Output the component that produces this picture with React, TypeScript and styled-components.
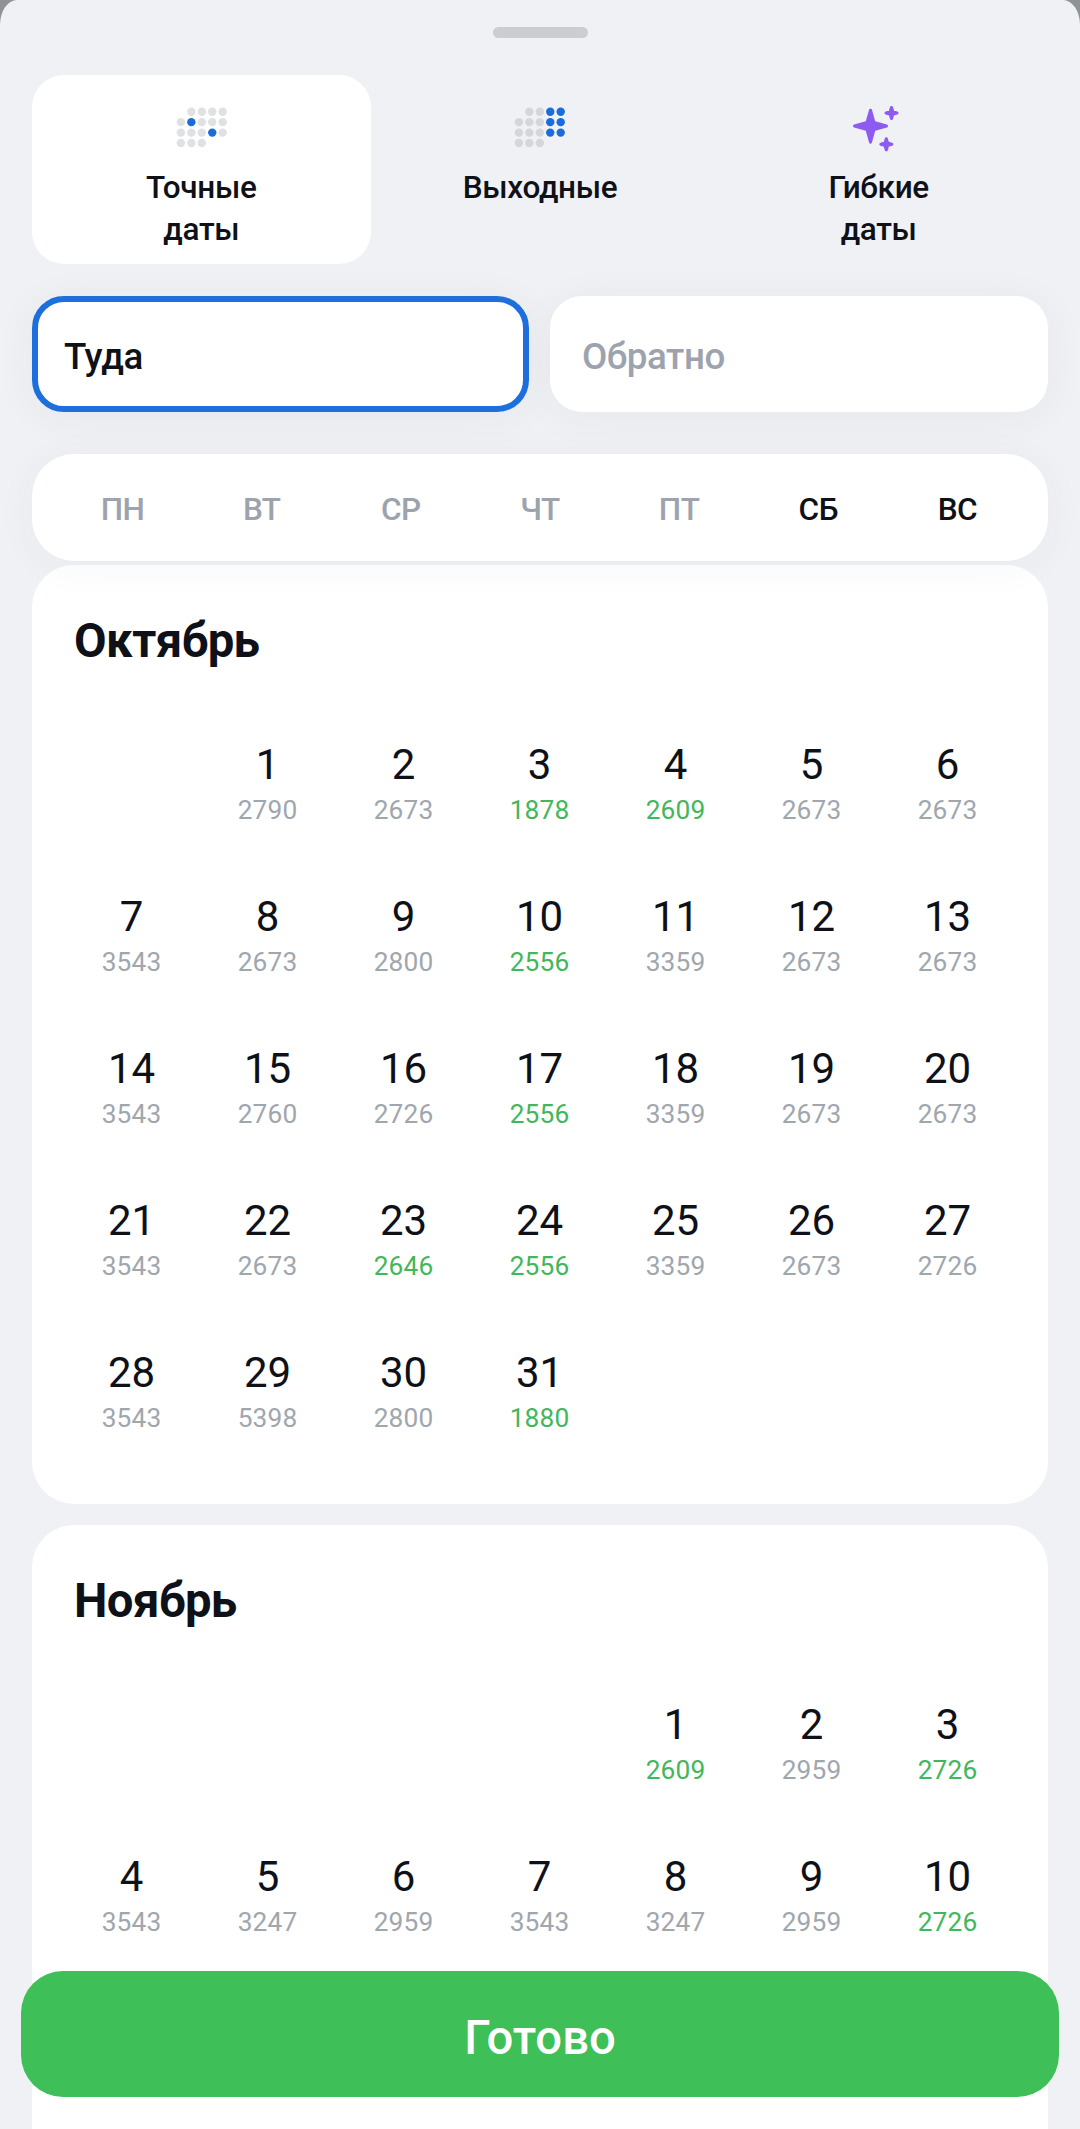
import React from 'react';
import styled, { createGlobalStyle } from 'styled-components';

const GlobalStyle = createGlobalStyle`
  * { box-sizing: border-box; }
  html, body { margin: 0; padding: 0; background: #909396; overflow: hidden; }
  body { font-family: Roboto, "Noto Sans", sans-serif; color: #0e1118; }
`;

const Sheet = styled.main`
  position: relative;
  display: flex;
  flex-direction: column;
  width: 1080px;
  height: 2129px;
  padding: 27px 32px 0;
  overflow: hidden;
  background: #f0f1f5;
  border-radius: 17px 17px 0 0 / 25px 25px 0 0;
`;

const Handle = styled.div`
  flex: none;
  align-self: center;
  width: 95px;
  height: 11px;
  border-radius: 6px;
  background: #cbced1;
`;

const Tabs = styled.div`
  flex: none;
  display: grid;
  grid-template-columns: repeat(3, 1fr);
  height: 189px;
  margin-top: 37px;
`;

const Tab = styled.button<{ $active?: boolean }>`
  display: flex;
  flex-direction: column;
  align-items: center;
  padding: 21px 60px 0;
  border: 0;
  border-radius: 32px;
  background: ${(p) => (p.$active ? '#fff' : 'transparent')};
  color: inherit;
  font: 500 31.5px/42px Roboto, "Noto Sans", sans-serif;
  letter-spacing: -0.3px;
`;

const TabIcon = styled.svg`
  flex: none;
  width: 63px;
  height: 63px;
  margin-bottom: 8px;
`;

const TabLabel = styled.span<{ $narrow?: boolean }>`
  width: ${(p) => (p.$narrow ? '130px' : 'auto')};
  text-align: center;
`;

const Fields = styled.div`
  flex: none;
  display: grid;
  grid-template-columns: 497px 498px;
  justify-content: space-between;
  height: 116px;
  margin-top: 32px;
`;

const Field = styled.div<{ $focused?: boolean }>`
  display: flex;
  align-items: center;
  padding: ${(p) => (p.$focused ? '6px 26px 0' : '6px 32px 0')};
  border: ${(p) => (p.$focused ? '6px solid #1d6fde' : '0')};
  border-radius: 32px;
  background: #fff;
  box-shadow: 0 5px 42px rgba(50, 60, 60, 0.05);
  color: ${(p) => (p.$focused ? '#0e1118' : '#9ca3ae')};
  font-size: 36.75px;
  font-weight: 500;
  line-height: 42px;
  letter-spacing: -0.45px;
`;

const WeekBar = styled.div`
  flex: none;
  position: relative;
  z-index: 1;
  display: grid;
  grid-template-columns: repeat(7, 1fr);
  align-items: center;
  height: 107px;
  margin-top: 42px;
  padding: 4px 21px 0;
  border-radius: 42px;
  background: #fff;
  box-shadow: 0 5px 42px rgba(50, 60, 60, 0.045);
`;

const WeekDay = styled.span<{ $weekend: boolean }>`
  text-align: center;
  font-size: 31.5px;
  font-weight: 500;
  line-height: 42px;
  letter-spacing: -0.5px;
  color: ${(p) => (p.$weekend ? '#0e1118' : '#9ca3ae')};
`;

const MonthList = styled.div`
  flex: none;
  display: flex;
  flex-direction: column;
  gap: 21px;
  margin-top: 4px;
`;

const Month = styled.section`
  height: 939px;
  padding: 45px 31.5px 0;
  border-radius: 42px;
  background: #fff;
`;

const MonthTitle = styled.h2`
  margin: 0 0 56px 10.5px;
  font-size: 47.25px;
  font-weight: 700;
  line-height: 63px;
  letter-spacing: -0.5px;
`;

const Days = styled.div`
  display: grid;
  grid-template-columns: repeat(7, 136px);
  grid-auto-rows: 152px;
`;

const Day = styled.div<{ $column?: number }>`
  grid-column: ${(p) => p.$column ?? 'auto'};
  display: flex;
  flex-direction: column;
  align-items: center;
`;

const DayNumber = styled.span`
  height: 65px;
  font-size: 42px;
  font-weight: 400;
  line-height: 72px;
`;

const Price = styled.span<{ $low: boolean }>`
  font-size: 26.25px;
  line-height: 32px;
  letter-spacing: 0.15px;
  color: ${(p) => (p.$low ? '#41b75a' : '#a0a6ae')};
`;

const DoneButton = styled.button`
  position: absolute;
  left: 21px;
  right: 21px;
  bottom: 32px;
  z-index: 2;
  height: 126px;
  padding: 7px 0 0;
  border: 0;
  border-radius: 42px;
  background: #3ebf57;
  color: #fff;
  font: 500 47.25px/56px Roboto, "Noto Sans", sans-serif;
`;

type DotsProps = { off: string; on: string[] };

const DotsIcon = ({ off, on }: DotsProps) => (
  <TabIcon viewBox="0 0 63 63" aria-hidden="true">
    {[0, 1, 2, 3].flatMap((row) =>
      [0, 1, 2, 3, 4]
        .filter((col) => !(row === 0 && col === 0) && !(row === 3 && col > 2))
        .map((col) => (
          <circle
            key={`${row}-${col}`}
            cx={10.9 + col * 10.45}
            cy={15.7 + row * 10.45}
            r={4.2}
            fill={on.includes(`${row}${col}`) ? '#1b6cd8' : off}
          />
        )),
    )}
  </TabIcon>
);

const SparklesIcon = () => (
  <TabIcon viewBox="0 0 63 63" aria-hidden="true">
    <g fill="#8d5af2" stroke="#8d5af2" strokeLinejoin="round">
      <path
        strokeWidth="3"
        d="M23.5 14.2 27 26.5 39.5 30 27 33.5 23.5 46.2 20 33.5 7.5 30 20 26.5Z"
      />
      <path
        strokeWidth="3.2"
        d="M44.5 11.6 45.7 15.8 49.9 17 45.7 18.2 44.5 22.4 43.3 18.2 39.1 17 43.3 15.8Z"
      />
      <path
        strokeWidth="3.2"
        d="M39.3 42.9 40.5 47.1 44.7 48.3 40.5 49.5 39.3 53.7 38.1 49.5 33.9 48.3 38.1 47.1Z"
      />
    </g>
  </TabIcon>
);

type DayData = [price: number, low?: boolean];

const october: DayData[] = [
  [2790], [2673], [1878, true], [2609, true], [2673], [2673],
  [3543], [2673], [2800], [2556, true], [3359], [2673], [2673],
  [3543], [2760], [2726], [2556, true], [3359], [2673], [2673],
  [3543], [2673], [2646, true], [2556, true], [3359], [2673], [2726],
  [3543], [5398], [2800], [1880, true],
];

const november: DayData[] = [
  [2609, true], [2959], [2726, true],
  [3543], [3247], [2959], [3543], [3247], [2959], [2726, true],
];

const months = [
  { title: 'Октябрь', firstColumn: 2, days: october },
  { title: 'Ноябрь', firstColumn: 5, days: november },
];

const weekDays = ['ПН', 'ВТ', 'СР', 'ЧТ', 'ПТ', 'СБ', 'ВС'];

export default function App() {
  return (
    <>
      <GlobalStyle />
      <Sheet>
        <Handle />
        <Tabs>
          <Tab $active>
            <DotsIcon off="#e0e1e3" on={['11', '23']} />
            <TabLabel $narrow>Точные даты</TabLabel>
          </Tab>
          <Tab>
            <DotsIcon off="#d4d6d9" on={['03', '04', '13', '14', '23', '24']} />
            <TabLabel>Выходные</TabLabel>
          </Tab>
          <Tab>
            <SparklesIcon />
            <TabLabel $narrow>Гибкие даты</TabLabel>
          </Tab>
        </Tabs>
        <Fields>
          <Field $focused>Туда</Field>
          <Field>Обратно</Field>
        </Fields>
        <WeekBar>
          {weekDays.map((name, i) => (
            <WeekDay key={name} $weekend={i > 4}>{name}</WeekDay>
          ))}
        </WeekBar>
        <MonthList>
          {months.map((month) => (
            <Month key={month.title}>
              <MonthTitle>{month.title}</MonthTitle>
              <Days>
                {month.days.map(([price, low], i) => (
                  <Day key={i} $column={i === 0 ? month.firstColumn : undefined}>
                    <DayNumber>{i + 1}</DayNumber>
                    <Price $low={!!low}>{price}</Price>
                  </Day>
                ))}
              </Days>
            </Month>
          ))}
        </MonthList>
        <DoneButton>Готово</DoneButton>
      </Sheet>
    </>
  );
}
